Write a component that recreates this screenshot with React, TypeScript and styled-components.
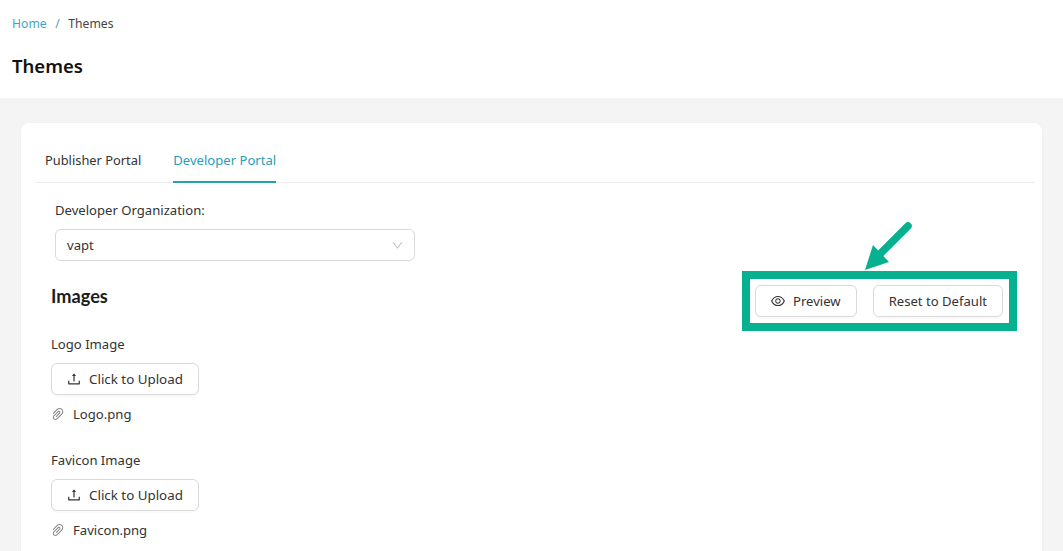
import React from "react";
import styled, { createGlobalStyle } from "styled-components";
import { AiOutlineEye, AiOutlineUpload, AiOutlinePaperClip, AiOutlineDown } from "react-icons/ai";

const Global = createGlobalStyle`
  html, body { margin: 0; padding: 0; height: 551px; overflow: hidden; background: #f4f4f4; }
  body { font-family: "Noto Sans", "Open Sans", sans-serif; font-size: 13.1px; color: #262626; }
`;
const Page = styled.div`width: 1063px; height: 551px; overflow: hidden; position: relative; display: flex; flex-direction: column;`;
const Header = styled.header`background: #fff; height: 98px; padding: 14px 12px 0; box-sizing: border-box; flex: none;`;
const Crumbs = styled.nav`display: flex; gap: 8.5px; font-size: 12.2px; line-height: 19px;`;
const Crumb = styled.span<{ $muted?: boolean }>`color: ${(p) => (p.$muted ? "#3fa5bd" : "#444")};`;
const Title = styled.h1`margin: 20px 0 0; font-size: 18.5px; line-height: 26px; font-weight: 600; color: #111;`;
const Main = styled.main`flex: 1; padding: 25px 21px 0; min-height: 0;`;
const Card = styled.section`background: #fff; border-radius: 8px; padding: 14px 7px 0 14px; height: 600px; box-sizing: border-box; box-shadow: 0 0 2px rgba(0,0,0,.05);`;
const Tabs = styled.div`display: flex; gap: 32px; height: 45px; padding-left: 10px; border-bottom: 1px solid #ececec;`;
const Tab = styled.div<{ $active?: boolean }>`
  height: 46px; line-height: 46px; box-sizing: border-box;
  font-size: ${(p) => (p.$active ? "13.1px" : "12.85px")};
  color: ${(p) => (p.$active ? "#2a9db8" : "#333")};
  border-bottom: ${(p) => (p.$active ? "2px solid #2a9db8" : "none")};
`;
const Body = styled.div`padding: 17px 0 0 16px;`;
const FieldLabel = styled.div`margin-left: 4px; line-height: 20px; color: #333;`;
const Select = styled.div`
  margin: 9px 0 0 4px; width: 360px; height: 32px; box-sizing: border-box; border: 1px solid #d9d9d9; border-radius: 6px;
  padding: 0 10px 0 11px; display: flex; align-items: center; justify-content: space-between; color: #333;
  svg { color: #c4c4c4; }
`;
const HeadRow = styled.div`display: flex; justify-content: space-between; align-items: center; margin-top: 19px; padding-right: 32px; height: 32px;`;
const Heading = styled.h2`margin: 0; font-family: "Lato", sans-serif; font-size: 18.2px; font-weight: 700; color: #1c1c1c;`;
const Actions = styled.div`display: flex; gap: 16px; margin-top: 9px;`;
const Button = styled.button<{ $size?: number }>`
  height: 32px; box-sizing: border-box; background: #fff; border: 1px solid #d9d9d9; border-radius: 6px; padding: 0 15px;
  display: inline-flex; align-items: center; gap: 7px; font-family: inherit; font-size: ${(p) => p.$size ?? 13.1}px; color: #333;
  box-shadow: 0 2px 0 rgba(0,0,0,.02);
  svg { color: #333; flex: none; margin-left: -1px; }
`;
const Section = styled.div<{ $top: number }>`margin-top: ${(p) => p.$top}px;`;
const SectionLabel = styled.div`line-height: 20px; color: #333;`;
const UploadWrap = styled.div`margin-top: 9px;`;
const FileRow = styled.div`
  display: flex; align-items: center; gap: 7px; margin-top: 9px; height: 20px; color: #333;
  svg { color: #8c8c8c; flex: none; margin-left: -1px; }
`;
const Highlight = styled.div`position: absolute; left: 742px; top: 271px; width: 275px; height: 60px; box-sizing: border-box; border: 8px solid #07b08e; pointer-events: none;`;
const Arrow = styled.svg`position: absolute; left: 860px; top: 218px; width: 56px; height: 56px;`;

const Upload = () => (
  <UploadWrap>
    <Button $size={13.35}><AiOutlineUpload size={16} />Click to Upload</Button>
  </UploadWrap>
);

export default function App() {
  return (
    <Page>
      <Global />
      <Header>
        <Crumbs><Crumb $muted>Home</Crumb><Crumb $muted>/</Crumb><Crumb>Themes</Crumb></Crumbs>
        <Title>Themes</Title>
      </Header>
      <Main>
        <Card>
          <Tabs>
            <Tab>Publisher Portal</Tab>
            <Tab $active>Developer Portal</Tab>
          </Tabs>
          <Body>
            <FieldLabel>Developer Organization:</FieldLabel>
            <Select>vapt<AiOutlineDown size={13} /></Select>
            <HeadRow>
              <Heading>Images</Heading>
              <Actions>
                <Button><AiOutlineEye size={16} />Preview</Button>
                <Button>Reset to Default</Button>
              </Actions>
            </HeadRow>
            <Section $top={22}>
              <SectionLabel>Logo Image</SectionLabel>
              <Upload />
              <FileRow><AiOutlinePaperClip size={16} />Logo.png</FileRow>
            </Section>
            <Section $top={26}>
              <SectionLabel>Favicon Image</SectionLabel>
              <Upload />
              <FileRow><AiOutlinePaperClip size={16} />Favicon.png</FileRow>
            </Section>
          </Body>
        </Card>
      </Main>
      <Highlight />
      <Arrow viewBox="0 0 56 56">
        <path d="M48 8 20 36" stroke="#07b08e" strokeWidth="7.5" strokeLinecap="round" />
        <path d="M5 52 13 27 29 44Z" fill="#07b08e" />
      </Arrow>
    </Page>
  );
}
